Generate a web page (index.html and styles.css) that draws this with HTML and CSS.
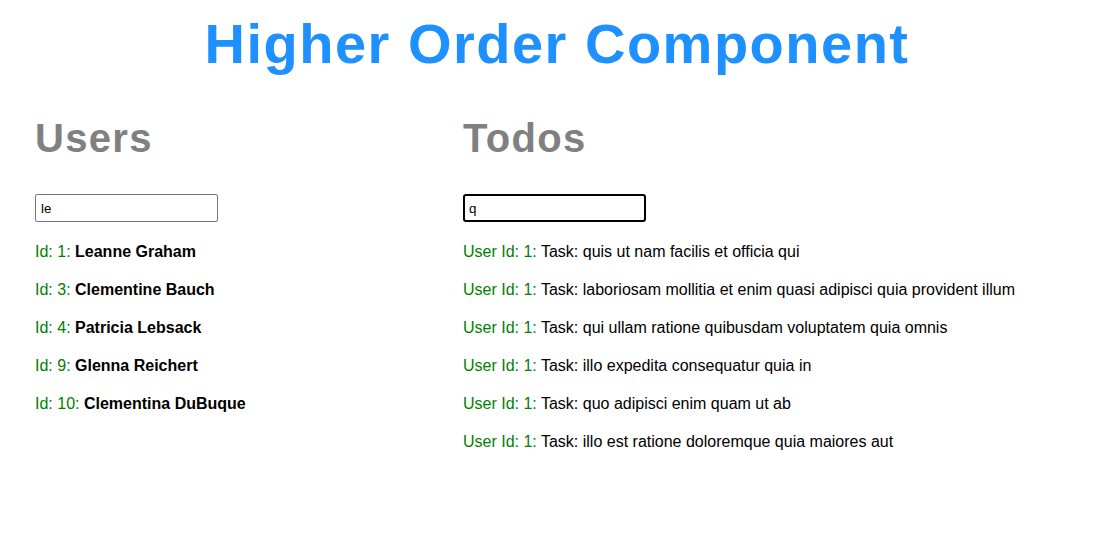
FILE: index.html
```html
<!DOCTYPE html>
<html lang="en">
<head>
<meta charset="utf-8">
<title>Higher Order Component</title>
<link rel="stylesheet" href="styles.css">
</head>
<body>
<h1 class="title">Higher Order Component</h1>
<div class="columns">
  <section class="col col-users">
    <h2 class="heading">Users</h2>
    <input class="search" type="text" value="le">
    <ul class="list">
      <li><span class="id">Id: 1:</span> <strong>Leanne Graham</strong></li>
      <li><span class="id">Id: 3:</span> <strong>Clementine Bauch</strong></li>
      <li><span class="id">Id: 4:</span> <strong>Patricia Lebsack</strong></li>
      <li><span class="id">Id: 9:</span> <strong>Glenna Reichert</strong></li>
      <li><span class="id">Id: 10:</span> <strong>Clementina DuBuque</strong></li>
    </ul>
  </section>
  <section class="col col-todos">
    <h2 class="heading">Todos</h2>
    <input class="search search-focused" type="text" value="q">
    <ul class="list">
      <li><span class="id">User Id: 1:</span> Task: quis ut nam facilis et officia qui</li>
      <li><span class="id">User Id: 1:</span> Task: laboriosam mollitia et enim quasi adipisci quia provident illum</li>
      <li><span class="id">User Id: 1:</span> Task: qui ullam ratione quibusdam voluptatem quia omnis</li>
      <li><span class="id">User Id: 1:</span> Task: illo expedita consequatur quia in</li>
      <li><span class="id">User Id: 1:</span> Task: quo adipisci enim quam ut ab</li>
      <li><span class="id">User Id: 1:</span> Task: illo est ratione doloremque quia maiores aut</li>
    </ul>
  </section>
</div>
</body>
</html>
```

FILE: styles.css
```css
html, body {
  margin: 0;
  padding: 0;
  background: #ffffff;
}

body {
  font-family: "Liberation Sans", Arial, sans-serif;
  color: #000000;
}

.title {
  margin: 12px 0 0;
  padding-left: 6px;
  font-size: 56px;
  line-height: 64px;
  font-weight: bold;
  letter-spacing: 1.5px;
  color: #1e90ff;
  text-align: center;
}

.columns {
  display: flex;
  padding-left: 35px;
}

.col-users {
  width: 428px;
}

.col-todos {
  flex: 1;
}

.heading {
  margin: 39px 0 0;
  font-size: 40px;
  line-height: 46px;
  font-weight: bold;
  letter-spacing: 1.3px;
  color: #808080;
}

.search {
  display: block;
  box-sizing: border-box;
  width: 183px;
  height: 28px;
  margin: 33px 0 0;
  padding: 0 5px;
  border: 1px solid #767676;
  border-radius: 2px;
  font-family: "Liberation Sans", Arial, sans-serif;
  font-size: 13.33px;
  color: #000000;
  background: #ffffff;
  outline: none;
}

.search-focused {
  border: 2px solid #000000;
  border-radius: 3px;
  padding: 0 4px;
}

.list {
  list-style: none;
  margin: 0;
  padding: 1px 0 0;
}

.list li {
  margin-top: 20px;
  font-size: 16px;
  line-height: 18px;
}

.id {
  color: #008000;
}

.list strong {
  font-weight: bold;
}
```
